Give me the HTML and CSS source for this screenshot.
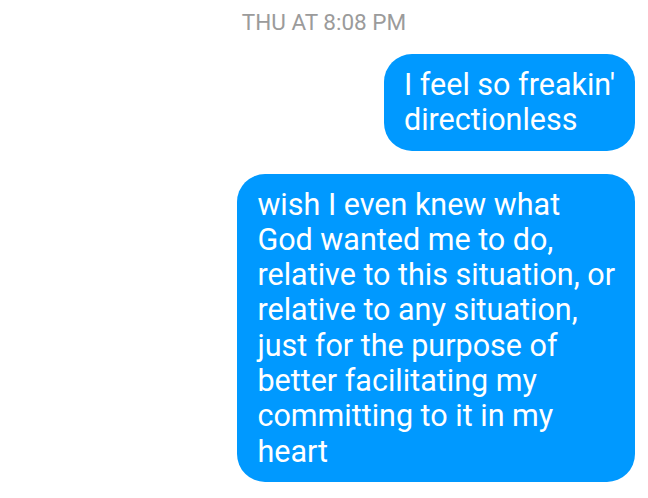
FILE: index.html
```html
<!DOCTYPE html>
<html>
<head>
<meta charset="utf-8">
<link rel="stylesheet" href="styles.css">
</head>
<body>
<div class="thread">
  <div class="timestamp">THU AT 8:08 PM</div>
  <div class="bubble">I feel so freakin'<br>directionless</div>
  <div class="bubble">wish I even knew what<br>God wanted me to do,<br>relative to this situation, or<br>relative to any situation,<br>just for the purpose of<br>better facilitating my<br>committing to it in my<br>heart</div>
</div>
</body>
</html>
```

FILE: styles.css
```css
html, body {
  margin: 0;
  padding: 0;
  background: #ffffff;
}
.thread {
  display: flex;
  flex-direction: column;
  align-items: flex-end;
  gap: 23px;
  padding: 8px 13px 0 0;
  font-family: Roboto, "Noto Sans", sans-serif;
}
.timestamp {
  align-self: stretch;
  text-align: center;
  padding-left: 13px;
  font-size: 22.5px;
  line-height: 28px;
  color: #9b9b9b;
  margin-bottom: -5px;
}
.bubble {
  background: #0099ff;
  color: #ffffff;
  font-size: 30.5px;
  line-height: 35.3px;
  padding: 13px 20px 13px 20px;
  border-radius: 28px;
}
```
